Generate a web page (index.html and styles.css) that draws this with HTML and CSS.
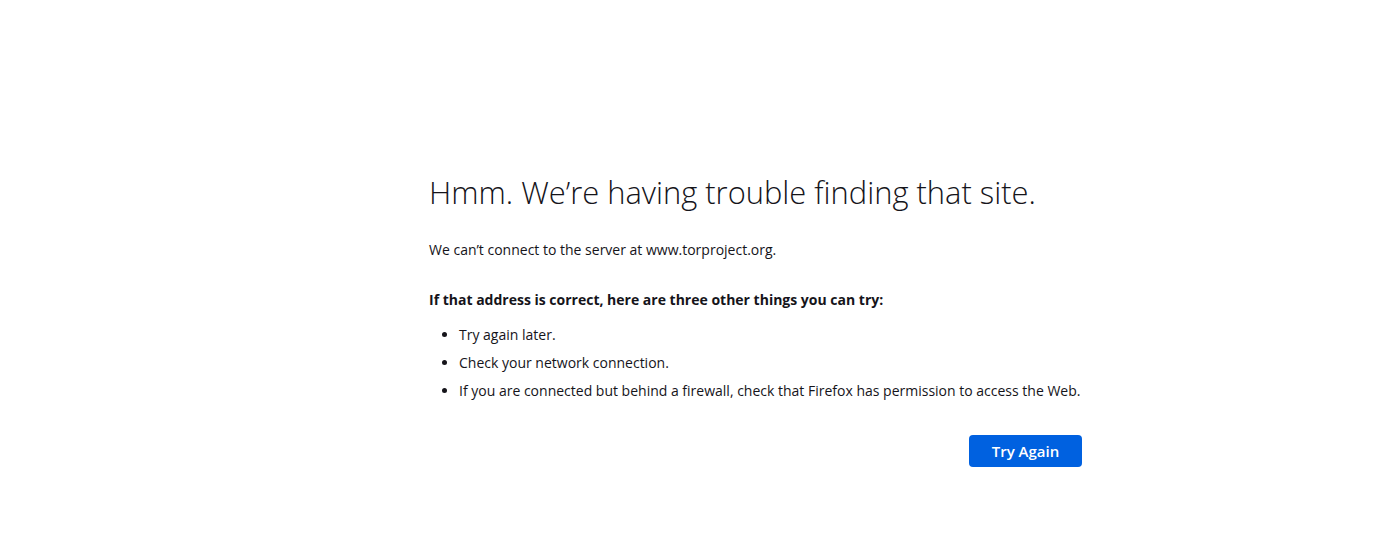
FILE: index.html
```html
<!DOCTYPE html>
<html lang="en">
<head>
<meta charset="utf-8">
<title>Server Not Found</title>
<link rel="stylesheet" href="styles.css">
</head>
<body>
<main class="container">
  <h1 class="title">Hmm. We’re having trouble finding that site.</h1>
  <p class="desc">We can’t connect to the server at www.torproject.org.</p>
  <p class="strong">If that address is correct, here are three other things you can try:</p>
  <ul class="tips">
    <li>Try again later.</li>
    <li>Check your network connection.</li>
    <li>If you are connected but behind a firewall, check that Firefox has permission to access the Web.</li>
  </ul>
  <div class="actions">
    <button class="btn">Try Again</button>
  </div>
</main>
</body>
</html>
```
FILE: styles.css
```css
html, body {
  margin: 0;
  height: 100%;
  background: #ffffff;
}
body {
  display: flex;
  justify-content: center;
  font-family: "Open Sans", "Noto Sans", sans-serif;
  color: #15141a;
  font-size: 14px;
}
.container {
  width: 653px;
  padding-left: 114px;
  padding-top: 168px;
}
.title {
  margin: 0;
  font-weight: 300;
  font-size: 30.9px;
  line-height: 48px;
  white-space: nowrap;
}
.desc {
  margin: 24px 0 0;
  line-height: 20px;
}
.strong {
  margin: 30px 0 0;
  font-weight: 700;
  line-height: 20px;
}
.tips {
  margin: 15px 0 0;
  padding-left: 30px;
}
.tips li {
  line-height: 20px;
  margin-bottom: 8px;
}
.actions {
  display: flex;
  justify-content: flex-end;
  margin-top: 34px;
}
.btn {
  width: 113px;
  height: 32px;
  border: none;
  border-radius: 4px;
  background: #0061e0;
  color: #ffffff;
  font-family: "Open Sans", sans-serif;
  font-weight: 600;
  font-size: 15px;
}
```
